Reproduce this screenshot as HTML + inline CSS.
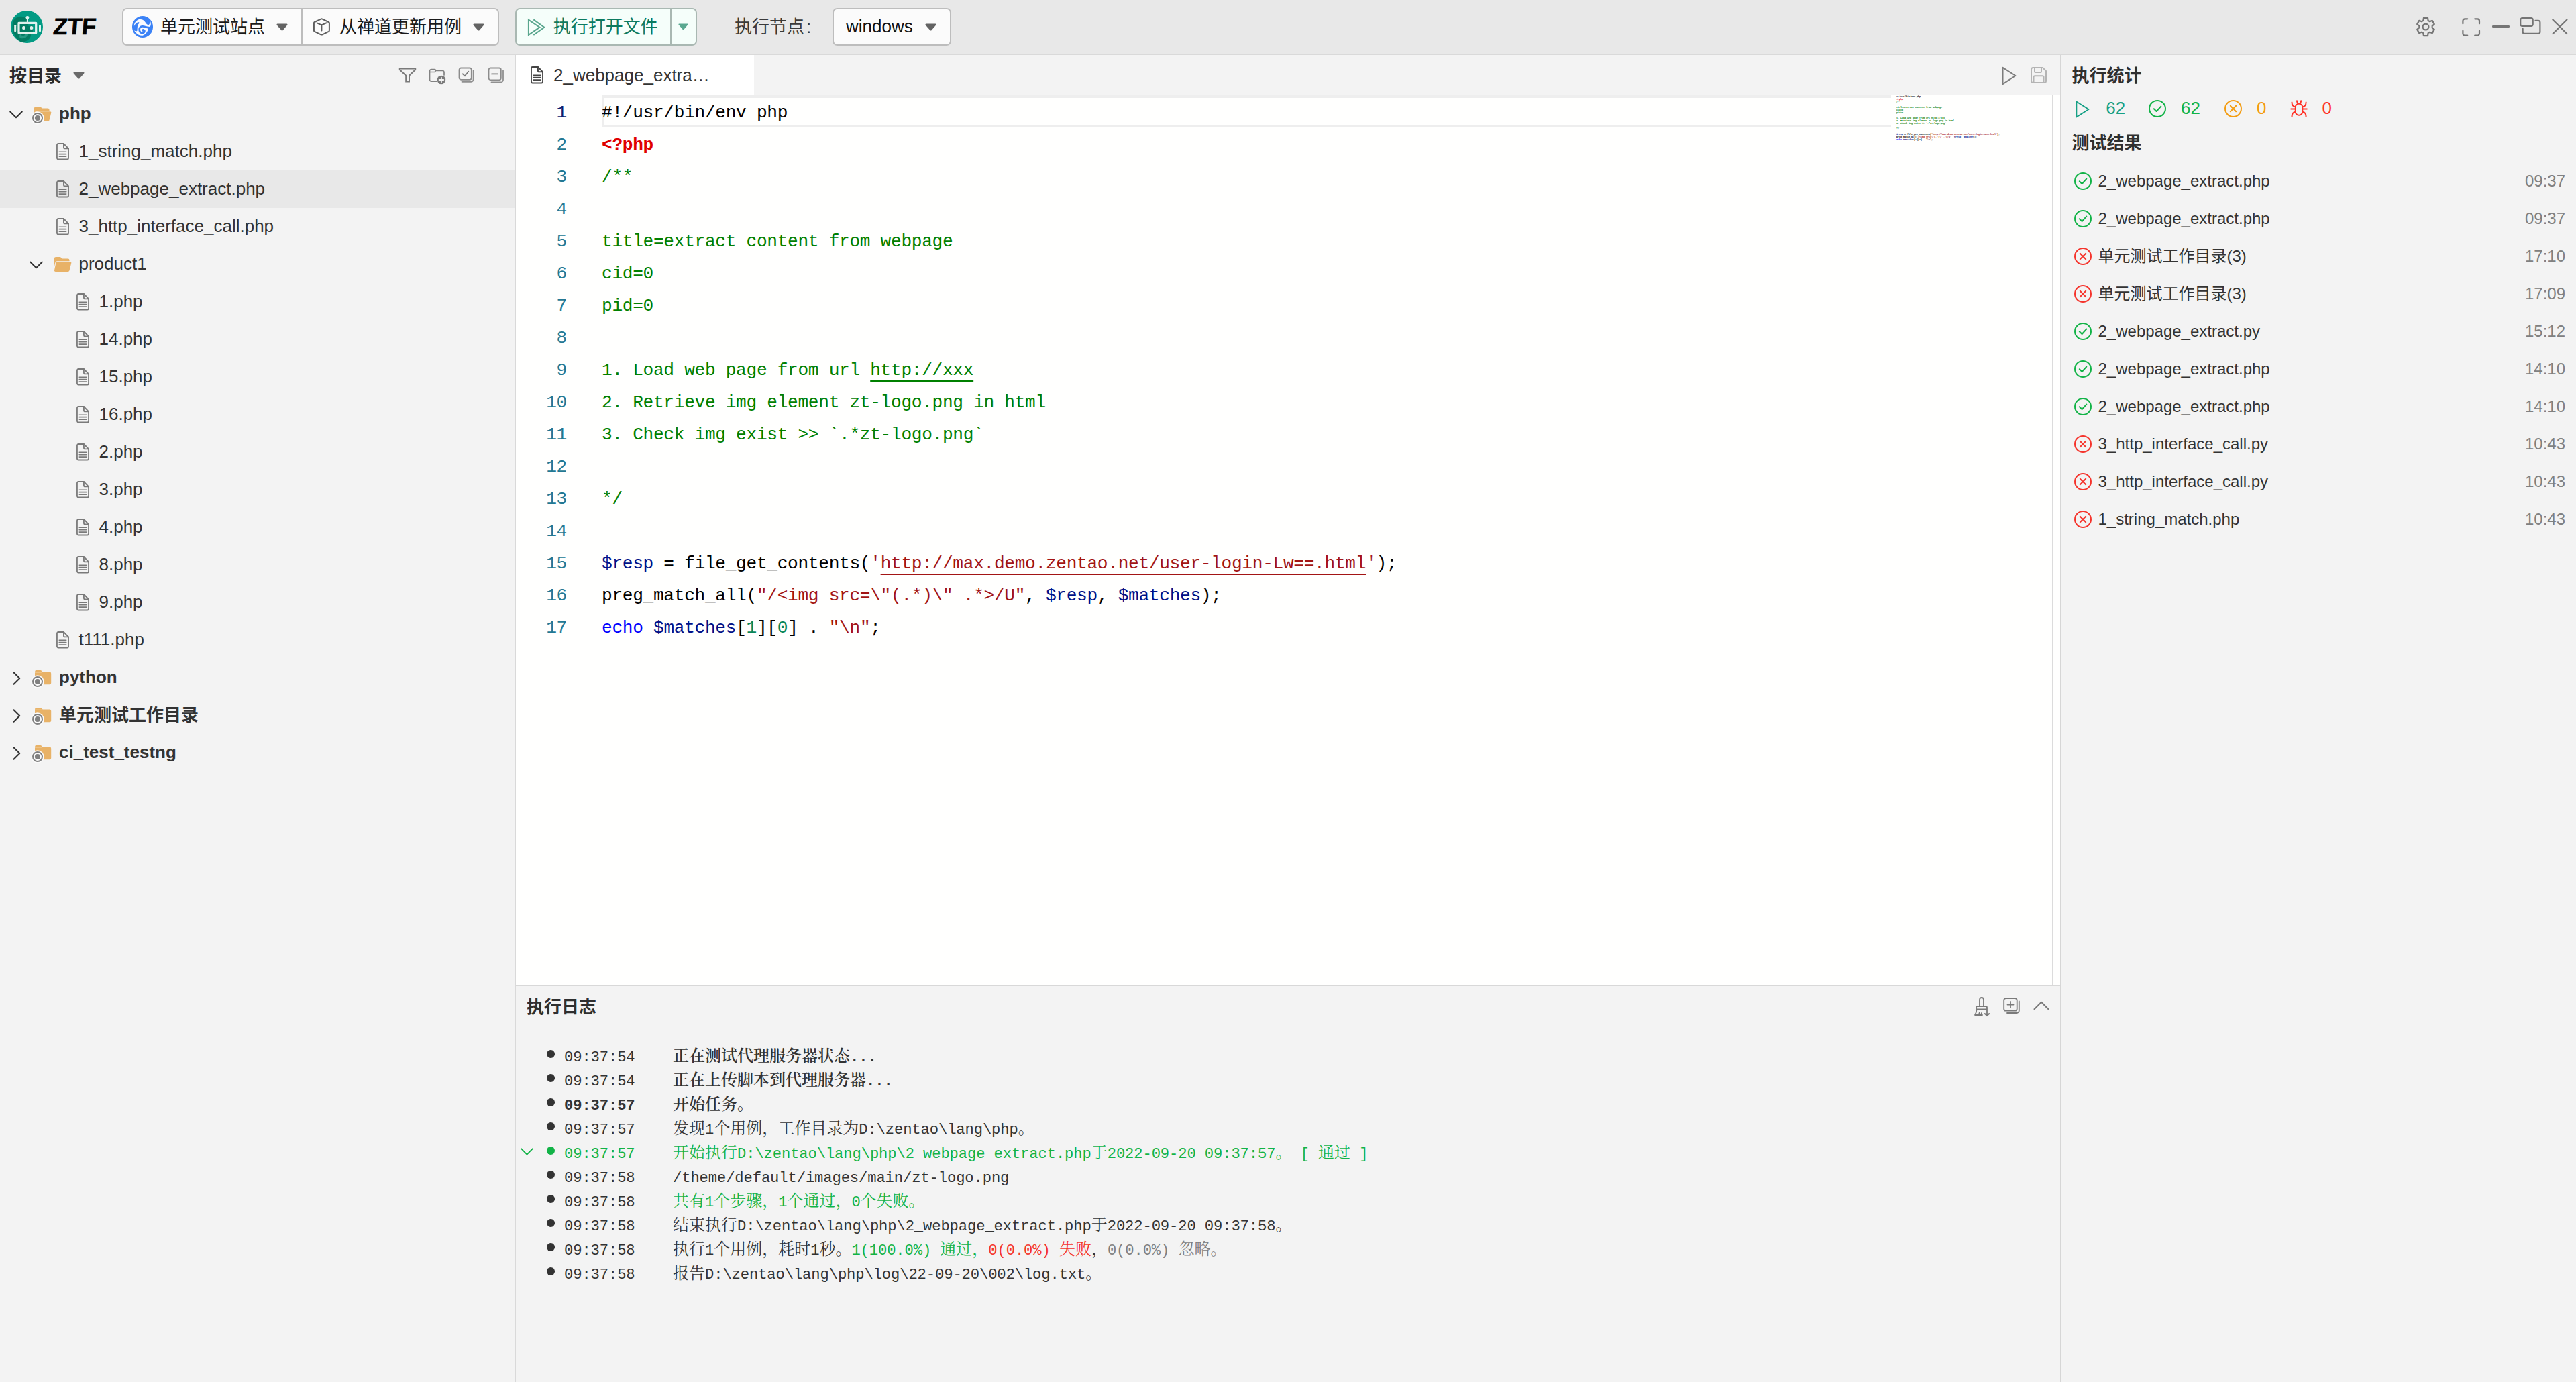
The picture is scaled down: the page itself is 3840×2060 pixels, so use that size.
<!DOCTYPE html>
<html lang="zh-CN"><head><meta charset="utf-8"><title>ZTF</title>
<style>
*{box-sizing:border-box;margin:0;padding:0}
html,body{width:3840px;height:2060px;overflow:hidden;background:#f3f3f3}
body{font-family:"Liberation Sans", "Noto Sans CJK SC", sans-serif;font-size:26px;color:#313c52;position:relative}
.abs{position:absolute}
#hdr{position:absolute;left:0;top:0;width:3840px;height:82px;background:#e8e8e8;border-bottom:2px solid #d9d9d9}
#left{position:absolute;left:0;top:82px;width:769px;height:1978px;background:#f3f3f3;border-right:2px solid #d9d9d9}
#center{position:absolute;left:769px;top:82px;width:2302px;height:1978px;background:#f3f3f3}
#right{position:absolute;left:3071px;top:82px;width:769px;height:1978px;background:#f3f3f3;border-left:2px solid #d6d6d6}
.t{position:absolute;white-space:nowrap;line-height:1}
svg{position:absolute;overflow:visible}
@media (max-width:2000px){html{zoom:.5}}

.cl{position:absolute;left:128px;height:48px;line-height:48px;white-space:pre;font-family:"Liberation Mono", "Noto Serif CJK SC", monospace;font-size:26.2px;letter-spacing:-0.3226px;color:#000}
.ln{position:absolute;left:0px;width:76px;height:48px;line-height:48px;text-align:right;font-family:"Liberation Mono", "Noto Serif CJK SC", monospace;font-size:26.2px;letter-spacing:-0.3226px;color:#237893}
.cm{color:#008000}.va{color:#001188}.kw{color:#0000ff}.st{color:#a31515}.nu{color:#098658}.mt{color:#e00000;font-weight:700}
.lk{text-decoration:underline;text-decoration-thickness:2px;text-underline-offset:8px}
.mm{position:absolute;left:2058px;top:59.599999999999994px;width:1600px;transform:scale(0.13);transform-origin:0 0;white-space:pre;font-family:"Liberation Mono", "Noto Serif CJK SC", monospace;font-size:26.2px;letter-spacing:-0.3226px;font-weight:700;color:#000}.mm .lk{text-decoration:none}

.lg{position:absolute;height:36px;line-height:36px;white-space:pre;font-family:"Liberation Mono", "Noto Serif CJK SC", monospace;font-size:24px;color:#333}
.lg b{font-weight:inherit;font-size:22.2px;letter-spacing:-0.1222px}
.bd b{font-weight:700}.gr{color:#12b347}.rd{color:#f5342c}.gy{color:#808080}
</style></head>
<body>
<div id="hdr"><svg style="left:16px;top:16px" width="48" height="48" viewBox="0 0 48 48">
<circle cx="24" cy="24" r="24" fill="#029b84"/>
<path d="M3.500 16C8 7.500 19 6.500 24.500 12.500C27.500 16 27 20 25 22.500H33V34.500H30C31 41 24 47 15.500 46.500C6 41 0 29 3.500 16Z" fill="#037c62"/>
<path d="M14 40.500C18 42.500 23.500 41 24.800 36.500C25.500 33.500 23.500 31.500 21.500 31.800C23 33.500 22 36.500 19 37C16.500 37.300 15 36 14.500 34.500C12.500 36 12.500 39 14 40.500Z" fill="#2a9f88" opacity=".85"/>
<g fill="#fff" opacity=".88">
<circle cx="24.900" cy="10.400" r="2.400"/><rect x="23.900" y="11" width="2" height="7"/>
<path d="M11.900 16.800H37.800A1.500 1.500 0 0 1 39.300 18.300V32.700A1.500 1.500 0 0 1 37.800 34.200H11.900A1.500 1.500 0 0 1 10.400 32.700V18.300A1.500 1.500 0 0 1 11.900 16.800ZM13.600 20V31H36.100V20Z" fill-rule="evenodd"/>
<circle cx="19.500" cy="25.500" r="2.500"/><circle cx="30.900" cy="25.500" r="2.500"/>
<rect x="5.200" y="20.800" width="3" height="10.600" rx="1.500"/><rect x="42" y="20.800" width="3" height="10.600" rx="1.500"/>
</g></svg>
<div class="t" style="left:77.500px;top:23px;font-size:33.500px;height:33.500px;font-weight:700;color:#000;-webkit-text-stroke:0.700px #000;transform:skewX(-5deg) scaleX(1.040);transform-origin:left bottom">ZTF</div>
<div class="abs" style="left:182px;top:12px;width:562px;height:56px;border:2px solid #bdbdbd;border-radius:7px;background:#fbfbfb"></div>
<div class="abs" style="left:449px;top:14px;width:2px;height:52px;background:#bdbdbd"></div>
<svg style="left:197px;top:24px" width="31" height="32" viewBox="0 0 31 32">
<ellipse cx="15.500" cy="16" rx="15.500" ry="16" fill="#3b82f6"/>
<path d="M2.900 13.400C3.300 10.800 5.800 6.200 10.300 5.100C14.500 4.200 17.300 6.200 19 8.500C20.300 10.300 21.200 11.800 22.800 12.700C24.300 13.500 25.700 12.600 26.100 10.700C26.400 9.400 26.300 8.200 26.400 7.100C27.400 8.400 27.900 10 27.800 12.400C27.600 14.500 26.600 16 25 16.600C24.300 16.800 23.500 16.900 23 16.900C23.800 18.500 23.700 20.200 23 21.800C21.800 24.600 19.500 27.400 15.600 28.700C12.400 29.400 8.500 27.700 5.700 24.800C4.500 23.500 3.600 22.300 3.100 21.200C4.500 21.900 5.800 22.400 7.100 21.900L7.500 16C7.800 13.500 9.200 11.400 10.500 10C9.800 9.500 9.200 9.300 8.700 9.400C6.600 9.900 5.300 11.500 4.400 13.300C3.800 14.300 3.300 15 2.900 15.300Z" fill="#fbfcff"/>
<path d="M8.900 9.300C10 9.100 10.700 9.700 10.400 10.500C9.200 11.800 8 13.800 7.700 16.200C7.400 18.400 7.500 20.400 7.300 21.900C6 22.500 4.600 21.900 3.300 20.600C2.600 18.400 2.600 16.400 3.100 14.800C4.200 12 6.500 9.800 8.900 9.300Z" fill="#3b82f6"/>
<path d="M25 17.100C21.500 17.700 18.500 14.800 14.700 15.400C11.700 15.900 10.500 18.400 10.700 20.600C11 23.300 13 24.900 15.300 24.900C17.500 24.900 18.700 23.200 18.300 21.500" fill="none" stroke="#3b82f6" stroke-width="2.800" stroke-linecap="round"/>
<circle cx="16.500" cy="21" r="2.100" fill="#3b82f6"/>
</svg>
<div class="t" style="left:239px;top:26.50px;font-size:26px;height:26px;color:#1a1a1a;">单元测试站点</div>
<svg style="left:412px;top:35.3px" width="17" height="11" viewBox="0 0 17 11"><path d="M1.6 0.5h13.8c1 0 1.500 1.100.8 1.900l-6.500 7.600c-.6.700-1.700.700-2.300 0L.8 2.400C.1 1.600.6.500 1.600.5z" fill="#636363"/></svg>
<svg style="left:465px;top:26px" width="29" height="28" viewBox="0 0 29 28" fill="none" stroke="#5e5e5e" stroke-width="2" stroke-linejoin="round" stroke-linecap="round">
<path d="M13.300 2.600Q14.400 2.100 15.500 2.600L24.900 7Q25.900 7.500 25.900 8.600V19.300Q25.900 20.400 24.900 20.900L15.500 25.300Q14.400 25.800 13.300 25.300L3.900 20.900Q2.900 20.400 2.900 19.300V8.600Q2.900 7.500 3.900 7Z"/><path d="M7.500 8.300L14.400 11.300L21.300 8.300M14.400 11.300V19.600"/></svg>
<div class="t" style="left:506px;top:26.50px;font-size:26px;height:26px;color:#1a1a1a;">从禅道更新用例</div>
<svg style="left:705px;top:35.3px" width="17" height="11" viewBox="0 0 17 11"><path d="M1.6 0.5h13.8c1 0 1.500 1.100.8 1.900l-6.500 7.600c-.6.700-1.700.700-2.300 0L.8 2.400C.1 1.600.6.500 1.600.5z" fill="#636363"/></svg>
<div class="abs" style="left:768px;top:12px;width:271px;height:56px;border:2px solid #a9b8b2;border-radius:7px;background:#f5fefa"></div>
<div class="abs" style="left:999px;top:14px;width:2px;height:52px;background:#a9b8b2"></div>
<svg style="left:786px;top:27px" width="28" height="27" viewBox="0 0 28 27" fill="none" stroke="#5aa68e" stroke-width="2" stroke-linejoin="miter" stroke-linecap="butt">
<path d="M1.900 2.600V24.800L18.400 13.700Z"/><path d="M9.300 2.400L25.300 13.700L9.300 25"/></svg>
<div class="t" style="left:824.7px;top:26.50px;font-size:26px;height:26px;color:#0d7a5f;">执行打开文件</div>
<svg style="left:1011px;top:35.3px" width="15" height="9.7" viewBox="0 0 17 11"><path d="M1.6 0.5h13.8c1 0 1.500 1.100.8 1.900l-6.500 7.600c-.6.700-1.700.700-2.300 0L.8 2.400C.1 1.600.6.500 1.600.5z" fill="#5aa890"/></svg>
<div class="t" style="left:1095px;top:26.50px;font-size:26px;height:26px;color:#3a3a3a;">执行节点<span style="margin-left:3px">:</span></div>
<div class="abs" style="left:1241px;top:12px;width:177px;height:56px;border:2px solid #bdbdbd;border-radius:7px;background:#fbfbfb"></div>
<div class="t" style="left:1261px;top:26.00px;font-size:26px;height:26px;color:#111;">windows</div>
<svg style="left:1379px;top:35.3px" width="17" height="11" viewBox="0 0 17 11"><path d="M1.6 0.5h13.8c1 0 1.500 1.100.8 1.900l-6.500 7.600c-.6.700-1.700.700-2.300 0L.8 2.400C.1 1.600.6.500 1.600.5z" fill="#636363"/></svg>
<svg style="left:3601px;top:25px" width="30" height="30" viewBox="0 0 30 30" fill="none" stroke="#757575" stroke-width="2.200" stroke-linejoin="round" stroke-linecap="round">
<circle cx="15" cy="15" r="4.400"/>
<path d="M11.39 5.89L11.94 1.95L18.06 1.95L18.61 5.89L21.09 7.32L24.77 5.83L27.83 11.13L24.69 13.57L24.69 16.43L27.83 18.87L24.77 24.17L21.09 22.68L18.61 24.11L18.06 28.05L11.94 28.05L11.39 24.11L8.91 22.68L5.23 24.17L2.17 18.87L5.31 16.43L5.31 13.57L2.17 11.13L5.23 5.83L8.91 7.32Z"/></svg>
<svg style="left:3670px;top:26.500px" width="28" height="27" viewBox="0 0 28 27" fill="none" stroke="#757575" stroke-width="2.200" stroke-linecap="round" stroke-linejoin="round">
<path d="M1.400 8.300V4.300a3 3 0 0 1 3-3h3.800M19.200 1.300H23a3 3 0 0 1 3 3v4M26 18.700v4a3 3 0 0 1-3 3h-3.800M8.200 25.700H4.400a3 3 0 0 1-3-3v-4"/></svg>
<div class="abs" style="left:3714.700px;top:38.400px;width:26.600px;height:2.400px;background:#757575;border-radius:1.200px"></div>
<svg style="left:3755px;top:24.500px" width="34" height="27" viewBox="0 0 34 27" fill="none" stroke="#757575" stroke-width="2.200" stroke-linecap="round" stroke-linejoin="round">
<rect x="2.200" y="2.200" width="18.500" height="11.700" rx="2.600"/><path d="M24.500 5.800h4.300a2.600 2.600 0 0 1 2.600 2.600v13.800a2.600 2.600 0 0 1-2.600 2.600H8.200a2.600 2.600 0 0 1-2.600-2.600v-4.400"/></svg>
<svg style="left:3804px;top:28px" width="24" height="24" viewBox="0 0 24 24" fill="none" stroke="#757575" stroke-width="2.200" stroke-linecap="round"><path d="M1.400 1.500L22.400 22.300M22.400 1.500L1.400 22.300"/></svg></div>
<div id="left"><div class="t" style="left:14px;top:17.50px;font-size:26px;height:26px;color:#2b2b2b;font-weight:700;">按目录</div>
<svg style="left:109px;top:25.299999999999997px" width="17" height="11" viewBox="0 0 17 11"><path d="M1.6 0.5h13.8c1 0 1.500 1.100.8 1.900l-6.500 7.600c-.6.700-1.700.700-2.300 0L.8 2.400C.1 1.600.6.500 1.600.5z" fill="#6a6a6a"/></svg>
<svg style="left:594px;top:18.700000000000003px" width="27" height="22" viewBox="0 0 27 22" fill="none" stroke="#7a7a7a" stroke-width="2" stroke-linejoin="miter" stroke-linecap="butt"><path d="M1.800 1.500H25.200V3L16 11.800V20.500H11.200V11.800L1.800 3Z"/></svg>
<svg style="left:639.300px;top:19.5px" width="28" height="25" viewBox="0 0 28 25" fill="none" stroke="#828282" stroke-width="1.700" stroke-linejoin="round" stroke-linecap="round">
<path d="M11.500 19.200H4A2.500 2.500 0 0 1 1.500 16.700V4A2.500 2.500 0 0 1 4 1.500H8.500C9.600 1.500 10 2 10.800 2.800C11.400 3.400 11.800 3.500 12.500 3.500H20.500A2.500 2.500 0 0 1 23 6V10"/><path d="M1.500 5.500H8.500C9.500 5.500 10.200 4.500 10.800 3"/>
<circle cx="18.900" cy="17" r="6.300" fill="#7a7a7a" stroke="none"/><path d="M18.900 13.700V20.300M15.600 17H22.200" stroke="#f3f3f3" stroke-width="1.900"/></svg>
<svg style="left:683.300px;top:18.200000000000003px" width="25" height="24" viewBox="0 0 25 24" fill="none" stroke="#8c8c8c" stroke-width="1.800" stroke-linejoin="round" stroke-linecap="round">
<rect x="1.500" y="1.500" width="18.300" height="17.300" rx="2.800"/><path d="M6.800 10.300L10 13.300L15.300 6.800" stroke="#7a7a7a"/><path d="M22.600 5.300V18.300A3.500 3.500 0 0 1 19.100 21.800H5.500" stroke="#909090"/></svg>
<svg style="left:726.500px;top:17.700000000000003px" width="25" height="24" viewBox="0 0 25 24" fill="none" stroke="#8c8c8c" stroke-width="1.800" stroke-linejoin="round" stroke-linecap="round">
<rect x="1.500" y="1.500" width="18.300" height="17.800" rx="2.800"/><path d="M6 10.400H15" stroke="#7a7a7a"/><path d="M23 5.300V19A3.500 3.500 0 0 1 19.500 22.500H5.500" stroke="#909090"/></svg>
<svg style="left:14px;top:83.0px" width="20" height="12" viewBox="0 0 20 12" fill="none" stroke="#333" stroke-width="2" stroke-linecap="round" stroke-linejoin="round"><path d="M1.200 1.500L10 10.300L18.800 1.500"/></svg>
<svg style="left:50px;top:76.0px" width="27" height="24" viewBox="0 0 27 24">
<path d="M1 3.200A2.200 2.200 0 0 1 3.200 1H9.200C10 1 10.600 1.300 11.100 1.900L12.600 3.600H21.300A2.200 2.200 0 0 1 23.500 5.800V7.200H4.800C3.700 7.200 2.800 7.900 2.500 9L1 15Z" fill="#e8b267"/>
<path d="M5.300 8.300H24.500A1.800 1.800 0 0 1 26.200 10.600L23.500 21.200A2.400 2.400 0 0 1 21.200 23H3A2 2 0 0 1 1.100 20.500L3.400 9.800A2 2 0 0 1 5.300 8.300Z" fill="#e8b267"/></svg>
<svg style="left:46px;top:83.8px" width="20" height="20" viewBox="0 0 20 20"><circle cx="10" cy="10" r="9.700" fill="#fbfbfb"/><circle cx="10" cy="10" r="7" fill="#fbfbfb" stroke="#808080" stroke-width="2"/><circle cx="10" cy="10" r="4.100" fill="#808080"/></svg>
<div class="t" style="left:88px;top:74.30px;font-size:26px;height:26px;color:#333333;font-weight:700;">php</div>
<svg style="left:83.5px;top:130.7px" width="19" height="25.5" viewBox="0 0 20 26" preserveAspectRatio="none" fill="none" stroke="#7a7a7a" stroke-width="1.900" stroke-linejoin="round" stroke-linecap="round">
<path d="M3.500 1H11.500L19 8.500V23A2 2 0 0 1 17 25H3A2 2 0 0 1 1 23V3A2 2 0 0 1 3 1Z"/><path d="M11.500 1V6.500A2 2 0 0 0 13.500 8.500H19"/><path d="M4.500 13.500H15.500M4.500 17H15.500M4.500 20.500H15.500" stroke-width="1.700"/></svg>
<div class="t" style="left:117.5px;top:130.30px;font-size:26px;height:26px;color:#333333;">1_string_match.php</div>
<div class="abs" style="left:0;top:172.0px;width:767px;height:56px;background:#e8e8e8"></div>
<svg style="left:83.5px;top:186.7px" width="19" height="25.5" viewBox="0 0 20 26" preserveAspectRatio="none" fill="none" stroke="#7a7a7a" stroke-width="1.900" stroke-linejoin="round" stroke-linecap="round">
<path d="M3.500 1H11.500L19 8.500V23A2 2 0 0 1 17 25H3A2 2 0 0 1 1 23V3A2 2 0 0 1 3 1Z"/><path d="M11.500 1V6.500A2 2 0 0 0 13.500 8.500H19"/><path d="M4.500 13.500H15.500M4.500 17H15.500M4.500 20.500H15.500" stroke-width="1.700"/></svg>
<div class="t" style="left:117.5px;top:186.30px;font-size:26px;height:26px;color:#333333;">2_webpage_extract.php</div>
<svg style="left:83.5px;top:242.7px" width="19" height="25.5" viewBox="0 0 20 26" preserveAspectRatio="none" fill="none" stroke="#7a7a7a" stroke-width="1.900" stroke-linejoin="round" stroke-linecap="round">
<path d="M3.500 1H11.500L19 8.500V23A2 2 0 0 1 17 25H3A2 2 0 0 1 1 23V3A2 2 0 0 1 3 1Z"/><path d="M11.500 1V6.500A2 2 0 0 0 13.500 8.500H19"/><path d="M4.500 13.500H15.500M4.500 17H15.500M4.500 20.500H15.500" stroke-width="1.700"/></svg>
<div class="t" style="left:117.5px;top:242.30px;font-size:26px;height:26px;color:#333333;">3_http_interface_call.php</div>
<svg style="left:44px;top:307.0px" width="20" height="12" viewBox="0 0 20 12" fill="none" stroke="#333" stroke-width="2" stroke-linecap="round" stroke-linejoin="round"><path d="M1.200 1.500L10 10.300L18.800 1.500"/></svg>
<svg style="left:80px;top:300.0px" width="27" height="24" viewBox="0 0 27 24">
<path d="M1 3.200A2.200 2.200 0 0 1 3.200 1H9.200C10 1 10.600 1.300 11.100 1.900L12.600 3.600H21.300A2.200 2.200 0 0 1 23.500 5.800V7.200H4.800C3.700 7.200 2.800 7.900 2.500 9L1 15Z" fill="#e8b267"/>
<path d="M5.300 8.300H24.500A1.800 1.800 0 0 1 26.200 10.600L23.500 21.200A2.400 2.400 0 0 1 21.200 23H3A2 2 0 0 1 1.100 20.500L3.400 9.800A2 2 0 0 1 5.300 8.300Z" fill="#e8b267"/></svg>
<div class="t" style="left:117.5px;top:298.30px;font-size:26px;height:26px;color:#333333;">product1</div>
<svg style="left:113.5px;top:354.7px" width="19" height="25.5" viewBox="0 0 20 26" preserveAspectRatio="none" fill="none" stroke="#7a7a7a" stroke-width="1.900" stroke-linejoin="round" stroke-linecap="round">
<path d="M3.500 1H11.500L19 8.500V23A2 2 0 0 1 17 25H3A2 2 0 0 1 1 23V3A2 2 0 0 1 3 1Z"/><path d="M11.500 1V6.500A2 2 0 0 0 13.500 8.500H19"/><path d="M4.500 13.500H15.500M4.500 17H15.500M4.500 20.500H15.500" stroke-width="1.700"/></svg>
<div class="t" style="left:147.5px;top:354.30px;font-size:26px;height:26px;color:#333333;">1.php</div>
<svg style="left:113.5px;top:410.7px" width="19" height="25.5" viewBox="0 0 20 26" preserveAspectRatio="none" fill="none" stroke="#7a7a7a" stroke-width="1.900" stroke-linejoin="round" stroke-linecap="round">
<path d="M3.500 1H11.500L19 8.500V23A2 2 0 0 1 17 25H3A2 2 0 0 1 1 23V3A2 2 0 0 1 3 1Z"/><path d="M11.500 1V6.500A2 2 0 0 0 13.500 8.500H19"/><path d="M4.500 13.500H15.500M4.500 17H15.500M4.500 20.500H15.500" stroke-width="1.700"/></svg>
<div class="t" style="left:147.5px;top:410.30px;font-size:26px;height:26px;color:#333333;">14.php</div>
<svg style="left:113.5px;top:466.7px" width="19" height="25.5" viewBox="0 0 20 26" preserveAspectRatio="none" fill="none" stroke="#7a7a7a" stroke-width="1.900" stroke-linejoin="round" stroke-linecap="round">
<path d="M3.500 1H11.500L19 8.500V23A2 2 0 0 1 17 25H3A2 2 0 0 1 1 23V3A2 2 0 0 1 3 1Z"/><path d="M11.500 1V6.500A2 2 0 0 0 13.500 8.500H19"/><path d="M4.500 13.500H15.500M4.500 17H15.500M4.500 20.500H15.500" stroke-width="1.700"/></svg>
<div class="t" style="left:147.5px;top:466.30px;font-size:26px;height:26px;color:#333333;">15.php</div>
<svg style="left:113.5px;top:522.7px" width="19" height="25.5" viewBox="0 0 20 26" preserveAspectRatio="none" fill="none" stroke="#7a7a7a" stroke-width="1.900" stroke-linejoin="round" stroke-linecap="round">
<path d="M3.500 1H11.500L19 8.500V23A2 2 0 0 1 17 25H3A2 2 0 0 1 1 23V3A2 2 0 0 1 3 1Z"/><path d="M11.500 1V6.500A2 2 0 0 0 13.500 8.500H19"/><path d="M4.500 13.500H15.500M4.500 17H15.500M4.500 20.500H15.500" stroke-width="1.700"/></svg>
<div class="t" style="left:147.5px;top:522.30px;font-size:26px;height:26px;color:#333333;">16.php</div>
<svg style="left:113.5px;top:578.7px" width="19" height="25.5" viewBox="0 0 20 26" preserveAspectRatio="none" fill="none" stroke="#7a7a7a" stroke-width="1.900" stroke-linejoin="round" stroke-linecap="round">
<path d="M3.500 1H11.500L19 8.500V23A2 2 0 0 1 17 25H3A2 2 0 0 1 1 23V3A2 2 0 0 1 3 1Z"/><path d="M11.500 1V6.500A2 2 0 0 0 13.500 8.500H19"/><path d="M4.500 13.500H15.500M4.500 17H15.500M4.500 20.500H15.500" stroke-width="1.700"/></svg>
<div class="t" style="left:147.5px;top:578.30px;font-size:26px;height:26px;color:#333333;">2.php</div>
<svg style="left:113.5px;top:634.7px" width="19" height="25.5" viewBox="0 0 20 26" preserveAspectRatio="none" fill="none" stroke="#7a7a7a" stroke-width="1.900" stroke-linejoin="round" stroke-linecap="round">
<path d="M3.500 1H11.500L19 8.500V23A2 2 0 0 1 17 25H3A2 2 0 0 1 1 23V3A2 2 0 0 1 3 1Z"/><path d="M11.500 1V6.500A2 2 0 0 0 13.500 8.500H19"/><path d="M4.500 13.500H15.500M4.500 17H15.500M4.500 20.500H15.500" stroke-width="1.700"/></svg>
<div class="t" style="left:147.5px;top:634.30px;font-size:26px;height:26px;color:#333333;">3.php</div>
<svg style="left:113.5px;top:690.7px" width="19" height="25.5" viewBox="0 0 20 26" preserveAspectRatio="none" fill="none" stroke="#7a7a7a" stroke-width="1.900" stroke-linejoin="round" stroke-linecap="round">
<path d="M3.500 1H11.500L19 8.500V23A2 2 0 0 1 17 25H3A2 2 0 0 1 1 23V3A2 2 0 0 1 3 1Z"/><path d="M11.500 1V6.500A2 2 0 0 0 13.500 8.500H19"/><path d="M4.500 13.500H15.500M4.500 17H15.500M4.500 20.500H15.500" stroke-width="1.700"/></svg>
<div class="t" style="left:147.5px;top:690.30px;font-size:26px;height:26px;color:#333333;">4.php</div>
<svg style="left:113.5px;top:746.7px" width="19" height="25.5" viewBox="0 0 20 26" preserveAspectRatio="none" fill="none" stroke="#7a7a7a" stroke-width="1.900" stroke-linejoin="round" stroke-linecap="round">
<path d="M3.500 1H11.500L19 8.500V23A2 2 0 0 1 17 25H3A2 2 0 0 1 1 23V3A2 2 0 0 1 3 1Z"/><path d="M11.500 1V6.500A2 2 0 0 0 13.500 8.500H19"/><path d="M4.500 13.500H15.500M4.500 17H15.500M4.500 20.500H15.500" stroke-width="1.700"/></svg>
<div class="t" style="left:147.5px;top:746.30px;font-size:26px;height:26px;color:#333333;">8.php</div>
<svg style="left:113.5px;top:802.7px" width="19" height="25.5" viewBox="0 0 20 26" preserveAspectRatio="none" fill="none" stroke="#7a7a7a" stroke-width="1.900" stroke-linejoin="round" stroke-linecap="round">
<path d="M3.500 1H11.500L19 8.500V23A2 2 0 0 1 17 25H3A2 2 0 0 1 1 23V3A2 2 0 0 1 3 1Z"/><path d="M11.500 1V6.500A2 2 0 0 0 13.500 8.500H19"/><path d="M4.500 13.500H15.500M4.500 17H15.500M4.500 20.500H15.500" stroke-width="1.700"/></svg>
<div class="t" style="left:147.5px;top:802.30px;font-size:26px;height:26px;color:#333333;">9.php</div>
<svg style="left:83.5px;top:858.7px" width="19" height="25.5" viewBox="0 0 20 26" preserveAspectRatio="none" fill="none" stroke="#7a7a7a" stroke-width="1.900" stroke-linejoin="round" stroke-linecap="round">
<path d="M3.500 1H11.500L19 8.500V23A2 2 0 0 1 17 25H3A2 2 0 0 1 1 23V3A2 2 0 0 1 3 1Z"/><path d="M11.500 1V6.500A2 2 0 0 0 13.500 8.500H19"/><path d="M4.500 13.500H15.500M4.500 17H15.500M4.500 20.500H15.500" stroke-width="1.700"/></svg>
<div class="t" style="left:117.5px;top:858.30px;font-size:26px;height:26px;color:#333333;">t111.php</div>
<svg style="left:18.5px;top:918.5px" width="12" height="20" viewBox="0 0 12 20" fill="none" stroke="#333" stroke-width="2" stroke-linecap="round" stroke-linejoin="round"><path d="M1.500 1.200L10.300 10L1.500 18.800"/></svg>
<svg style="left:51px;top:916.0px" width="26" height="23" viewBox="0 0 26 23">
<path d="M1 3.200A2.200 2.200 0 0 1 3.200 1H9.200C10 1 10.600 1.300 11.100 1.900L12.600 3.600H23A2.200 2.200 0 0 1 25.200 5.800V20A2.200 2.200 0 0 1 23 22.200H3.200A2.200 2.200 0 0 1 1 20Z" fill="#e8b267"/>
<path d="M1 4.200H12" stroke="#efc790" stroke-width="1.200"/></svg>
<svg style="left:46px;top:923.8px" width="20" height="20" viewBox="0 0 20 20"><circle cx="10" cy="10" r="9.700" fill="#fbfbfb"/><circle cx="10" cy="10" r="7" fill="#fbfbfb" stroke="#808080" stroke-width="2"/><circle cx="10" cy="10" r="4.100" fill="#808080"/></svg>
<div class="t" style="left:88px;top:914.30px;font-size:26px;height:26px;color:#333333;font-weight:700;">python</div>
<svg style="left:18.5px;top:974.5px" width="12" height="20" viewBox="0 0 12 20" fill="none" stroke="#333" stroke-width="2" stroke-linecap="round" stroke-linejoin="round"><path d="M1.500 1.200L10.300 10L1.500 18.800"/></svg>
<svg style="left:51px;top:972.0px" width="26" height="23" viewBox="0 0 26 23">
<path d="M1 3.200A2.200 2.200 0 0 1 3.200 1H9.200C10 1 10.600 1.300 11.100 1.900L12.600 3.600H23A2.200 2.200 0 0 1 25.200 5.800V20A2.200 2.200 0 0 1 23 22.200H3.200A2.200 2.200 0 0 1 1 20Z" fill="#e8b267"/>
<path d="M1 4.200H12" stroke="#efc790" stroke-width="1.200"/></svg>
<svg style="left:46px;top:979.8px" width="20" height="20" viewBox="0 0 20 20"><circle cx="10" cy="10" r="9.700" fill="#fbfbfb"/><circle cx="10" cy="10" r="7" fill="#fbfbfb" stroke="#808080" stroke-width="2"/><circle cx="10" cy="10" r="4.100" fill="#808080"/></svg>
<div class="t" style="left:88px;top:971.20px;font-size:26px;height:26px;color:#333333;font-weight:700;">单元测试工作目录</div>
<svg style="left:18.5px;top:1030.5px" width="12" height="20" viewBox="0 0 12 20" fill="none" stroke="#333" stroke-width="2" stroke-linecap="round" stroke-linejoin="round"><path d="M1.500 1.200L10.300 10L1.500 18.800"/></svg>
<svg style="left:51px;top:1028.0px" width="26" height="23" viewBox="0 0 26 23">
<path d="M1 3.200A2.200 2.200 0 0 1 3.200 1H9.200C10 1 10.600 1.300 11.100 1.900L12.600 3.600H23A2.200 2.200 0 0 1 25.200 5.800V20A2.200 2.200 0 0 1 23 22.200H3.200A2.200 2.200 0 0 1 1 20Z" fill="#e8b267"/>
<path d="M1 4.200H12" stroke="#efc790" stroke-width="1.200"/></svg>
<svg style="left:46px;top:1035.8px" width="20" height="20" viewBox="0 0 20 20"><circle cx="10" cy="10" r="9.700" fill="#fbfbfb"/><circle cx="10" cy="10" r="7" fill="#fbfbfb" stroke="#808080" stroke-width="2"/><circle cx="10" cy="10" r="4.100" fill="#808080"/></svg>
<div class="t" style="left:88px;top:1026.30px;font-size:26px;height:26px;color:#333333;font-weight:700;">ci_test_testng</div></div>
<div id="center"><div class="abs" style="left:0;top:0;width:355px;height:60px;background:#fff"></div>
<svg style="left:22px;top:17.2px" width="19" height="25.5" viewBox="0 0 20 26" preserveAspectRatio="none" fill="none" stroke="#444" stroke-width="2" stroke-linejoin="round" stroke-linecap="round">
<path d="M3.500 1H11.500L19 8.500V23A2 2 0 0 1 17 25H3A2 2 0 0 1 1 23V3A2 2 0 0 1 3 1Z"/><path d="M11.500 1V6.500A2 2 0 0 0 13.500 8.500H19"/><path d="M4.500 13.500H15.500M4.500 17H15.500M4.500 20.500H15.500" stroke-width="1.700"/></svg>
<div class="t" style="left:56px;top:17.00px;font-size:26px;height:26px;color:#333;">2_webpage_extra…</div>
<svg style="left:2215px;top:17px" width="22" height="28" viewBox="0 0 22 28" fill="none" stroke="#7d7d7d" stroke-width="2" stroke-linejoin="round"><path d="M1.500 1.800V26.200L20.500 14Z"/></svg>
<svg style="left:2258px;top:18px" width="24" height="24" viewBox="0 0 24 24" fill="none" stroke="#b4b4b4" stroke-width="2" stroke-linejoin="round" stroke-linecap="round">
<path d="M3.500 1H18L23 6V20.500A2.500 2.500 0 0 1 20.500 23H3.500A2.500 2.500 0 0 1 1 20.500V3.500A2.500 2.500 0 0 1 3.500 1Z"/><path d="M6 1.500V6.500A1.500 1.500 0 0 0 7.500 8H14.500A1.500 1.500 0 0 0 16 6.500V1.500"/><path d="M4.500 22.500V15A1.800 1.800 0 0 1 6.300 13.200H17.700A1.800 1.800 0 0 1 19.500 15V22.500"/></svg>
<div class="abs" style="left:0;top:60px;width:2302px;height:1326px;background:#fffffe"></div>
<div class="abs" style="left:128px;top:60px;width:1922px;height:48px;border:4px solid #eeeeee;border-right:none"></div>
<div class="abs" style="left:2290px;top:60px;width:1px;height:1326px;background:#dcdcdc"></div>
<div class="ln" style="top:61.5px;color:#0b216f">1</div>
<div class="cl" style="top:61.5px">#!/usr/bin/env php</div>
<div class="ln" style="top:109.5px">2</div>
<div class="cl" style="top:109.5px"><span class="mt">&lt;?php</span></div>
<div class="ln" style="top:157.5px">3</div>
<div class="cl" style="top:157.5px"><span class="cm">/**</span></div>
<div class="ln" style="top:205.5px">4</div>
<div class="ln" style="top:253.5px">5</div>
<div class="cl" style="top:253.5px"><span class="cm">title=extract content from webpage</span></div>
<div class="ln" style="top:301.5px">6</div>
<div class="cl" style="top:301.5px"><span class="cm">cid=0</span></div>
<div class="ln" style="top:349.5px">7</div>
<div class="cl" style="top:349.5px"><span class="cm">pid=0</span></div>
<div class="ln" style="top:397.5px">8</div>
<div class="ln" style="top:445.5px">9</div>
<div class="cl" style="top:445.5px"><span class="cm">1. Load web page from url <span class="lk">http://xxx</span></span></div>
<div class="ln" style="top:493.5px">10</div>
<div class="cl" style="top:493.5px"><span class="cm">2. Retrieve img element zt-logo.png in html</span></div>
<div class="ln" style="top:541.5px">11</div>
<div class="cl" style="top:541.5px"><span class="cm">3. Check img exist &gt;&gt; `.*zt-logo.png`</span></div>
<div class="ln" style="top:589.5px">12</div>
<div class="ln" style="top:637.5px">13</div>
<div class="cl" style="top:637.5px"><span class="cm">*/</span></div>
<div class="ln" style="top:685.5px">14</div>
<div class="ln" style="top:733.5px">15</div>
<div class="cl" style="top:733.5px"><span class="va">$resp</span> = file_get_contents(<span class="st">'<span class="lk">http://max.demo.zentao.net/user-login-Lw==.html</span>'</span>);</div>
<div class="ln" style="top:781.5px">16</div>
<div class="cl" style="top:781.5px">preg_match_all(<span class="st">"/&lt;img src=\"(.*)\" .*&gt;/U"</span>, <span class="va">$resp</span>, <span class="va">$matches</span>);</div>
<div class="ln" style="top:829.5px">17</div>
<div class="cl" style="top:829.5px"><span class="kw">echo</span> <span class="va">$matches</span>[<span class="nu">1</span>][<span class="nu">0</span>] . <span class="st">"\n"</span>;</div>
<div class="mm"><div style="height:30.8px;line-height:30.8px">#!/usr/bin/env php</div><div style="height:30.8px;line-height:30.8px"><span class="mt">&lt;?php</span></div><div style="height:30.8px;line-height:30.8px"><span class="cm">/**</span></div><div style="height:30.8px;line-height:30.8px">&nbsp;</div><div style="height:30.8px;line-height:30.8px"><span class="cm">title=extract content from webpage</span></div><div style="height:30.8px;line-height:30.8px"><span class="cm">cid=0</span></div><div style="height:30.8px;line-height:30.8px"><span class="cm">pid=0</span></div><div style="height:30.8px;line-height:30.8px">&nbsp;</div><div style="height:30.8px;line-height:30.8px"><span class="cm">1. Load web page from url <span class="lk">http://xxx</span></span></div><div style="height:30.8px;line-height:30.8px"><span class="cm">2. Retrieve img element zt-logo.png in html</span></div><div style="height:30.8px;line-height:30.8px"><span class="cm">3. Check img exist &gt;&gt; `.*zt-logo.png`</span></div><div style="height:30.8px;line-height:30.8px">&nbsp;</div><div style="height:30.8px;line-height:30.8px"><span class="cm">*/</span></div><div style="height:30.8px;line-height:30.8px">&nbsp;</div><div style="height:30.8px;line-height:30.8px"><span class="va">$resp</span> = file_get_contents(<span class="st">'<span class="lk">http://max.demo.zentao.net/user-login-Lw==.html</span>'</span>);</div><div style="height:30.8px;line-height:30.8px">preg_match_all(<span class="st">"/&lt;img src=\"(.*)\" .*&gt;/U"</span>, <span class="va">$resp</span>, <span class="va">$matches</span>);</div><div style="height:30.8px;line-height:30.8px"><span class="kw">echo</span> <span class="va">$matches</span>[<span class="nu">1</span>][<span class="nu">0</span>] . <span class="st">"\n"</span>;</div></div>
<div class="abs" style="left:0;top:1386px;width:2302px;height:2px;background:#d8d8d8"></div>
<div class="t" style="left:16px;top:1406.20px;font-size:26px;height:26px;color:#2f2f2f;font-weight:700;">执行日志</div>
<svg style="left:2174px;top:1404px" width="24" height="30" viewBox="0 0 24 30" fill="none" stroke="#7a7a7a" stroke-width="1.800" stroke-linecap="round" stroke-linejoin="round">
<path d="M8 14V4A3 3 0 0 1 14 4V14"/><path d="M4.500 14H17.500A1.500 1.500 0 0 1 19 15.500V18.500H3V15.500A1.500 1.500 0 0 1 4.500 14Z"/><path d="M3.500 18.500C3.500 22 2.500 24.500 1 27H12"/><path d="M6.500 27L7.800 23.500M10 27L11 24"/><path d="M19 19.500V28M15.800 25L19 28.200L22.200 25"/></svg>
<svg style="left:2217px;top:1405px" width="26" height="25" viewBox="0 0 26 25" fill="none" stroke="#7a7a7a" stroke-width="1.800" stroke-linejoin="round" stroke-linecap="round">
<rect x="1.200" y="1.200" width="19.500" height="18.500" rx="3"/><path d="M6.500 10.500H15.500M11 6V15"/><path d="M23.800 5.500V19.500A3.500 3.500 0 0 1 20.300 23H6"/></svg>
<svg style="left:2262px;top:1410px" width="24" height="14" viewBox="0 0 24 14" fill="none" stroke="#7a7a7a" stroke-width="2" stroke-linecap="round" stroke-linejoin="round"><path d="M1.500 12.200L12 1.800L22.500 12.200"/></svg>
<div class="abs" style="left:46.2px;top:1483.4px;width:11.6px;height:11.6px;border-radius:50%;background:#333"></div>
<div class="lg" style="left:72px;top:1476.0px;color:#333"><b>09:37:54</b></div>
<div class="lg bd" style="left:234px;top:1476.0px;font-weight:600">正在测试代理服务器状态<b>...</b></div>
<div class="abs" style="left:46.2px;top:1519.4px;width:11.6px;height:11.6px;border-radius:50%;background:#333"></div>
<div class="lg" style="left:72px;top:1512.0px;color:#333"><b>09:37:54</b></div>
<div class="lg bd" style="left:234px;top:1512.0px;font-weight:600">正在上传脚本到代理服务器<b>...</b></div>
<div class="abs" style="left:46.2px;top:1555.4px;width:11.6px;height:11.6px;border-radius:50%;background:#333"></div>
<div class="lg" style="left:72px;top:1548.0px;color:#333;font-weight:700"><b>09:37:57</b></div>
<div class="lg bd" style="left:234px;top:1548.0px;font-weight:600">开始任务。</div>
<div class="abs" style="left:46.2px;top:1591.4px;width:11.6px;height:11.6px;border-radius:50%;background:#333"></div>
<div class="lg" style="left:72px;top:1584.0px;color:#333"><b>09:37:57</b></div>
<div class="lg" style="left:234px;top:1584.0px;">发现<b>1</b>个用例，工作目录为<b>D:\zentao\lang\php</b>。</div>
<div class="abs" style="left:46.2px;top:1627.4px;width:11.6px;height:11.6px;border-radius:50%;background:#12b347"></div>
<svg style="left:7px;top:1628.5px" width="19" height="11" viewBox="0 0 19 11" fill="none" stroke="#12b347" stroke-width="1.800" stroke-linecap="round" stroke-linejoin="round"><path d="M1 1.200L9.500 9.700L18 1.200"/></svg>
<div class="lg" style="left:72px;top:1620.0px;color:#12b347"><b>09:37:57</b></div>
<div class="lg" style="left:234px;top:1620.0px;"><span class="gr">开始执行<b>D:\zentao\lang\php\2_webpage_extract.php</b>于<b>2022-09-20 09:37:57</b>。<b> [ </b>通过<b> ]</b></span></div>
<div class="abs" style="left:46.2px;top:1663.4px;width:11.6px;height:11.6px;border-radius:50%;background:#333"></div>
<div class="lg" style="left:72px;top:1656.0px;color:#333"><b>09:37:58</b></div>
<div class="lg" style="left:234px;top:1656.0px;"><b>/theme/default/images/main/zt-logo.png</b></div>
<div class="abs" style="left:46.2px;top:1699.4px;width:11.6px;height:11.6px;border-radius:50%;background:#333"></div>
<div class="lg" style="left:72px;top:1692.0px;color:#333"><b>09:37:58</b></div>
<div class="lg" style="left:234px;top:1692.0px;"><span class="gr">共有<b>1</b>个步骤，<b>1</b>个通过，<b>0</b>个失败。</span></div>
<div class="abs" style="left:46.2px;top:1735.4px;width:11.6px;height:11.6px;border-radius:50%;background:#333"></div>
<div class="lg" style="left:72px;top:1728.0px;color:#333"><b>09:37:58</b></div>
<div class="lg" style="left:234px;top:1728.0px;">结束执行<b>D:\zentao\lang\php\2_webpage_extract.php</b>于<b>2022-09-20 09:37:58</b>。</div>
<div class="abs" style="left:46.2px;top:1771.4px;width:11.6px;height:11.6px;border-radius:50%;background:#333"></div>
<div class="lg" style="left:72px;top:1764.0px;color:#333"><b>09:37:58</b></div>
<div class="lg" style="left:234px;top:1764.0px;">执行<b>1</b>个用例，耗时<b>1</b>秒。<span class="gr"><b>1(100.0%) </b>通过，</span><span class="rd"><b>0(0.0%) </b>失败</span>，<span class="gy"><b>0(0.0%) </b>忽略。</span></div>
<div class="abs" style="left:46.2px;top:1807.4px;width:11.6px;height:11.6px;border-radius:50%;background:#333"></div>
<div class="lg" style="left:72px;top:1800.0px;color:#333"><b>09:37:58</b></div>
<div class="lg" style="left:234px;top:1800.0px;">报告<b>D:\zentao\lang\php\log\22-09-20\002\log.txt</b>。</div></div>
<div id="right"><div class="t" style="left:15.5px;top:18.00px;font-size:26px;height:26px;color:#2f2f2f;font-weight:700;">执行统计</div>
<div class="t" style="left:15.5px;top:118.20px;font-size:26px;height:26px;color:#2f2f2f;font-weight:700;">测试结果</div>
<svg style="left:21px;top:68px" width="21" height="26" viewBox="0 0 21 26" fill="none" stroke="#16a085" stroke-width="2" stroke-linejoin="round"><path d="M1.300 1.500V24.500L19.500 13Z"/></svg>
<div class="t" style="left:66.30000000000018px;top:65.90px;font-size:26px;height:26px;color:#16a085;">62</div>
<svg style="left:129.30000000000018px;top:65.69999999999999px" width="28" height="28" viewBox="0 0 28 28" fill="none" stroke="#12b347" stroke-width="2" stroke-linecap="round" stroke-linejoin="round"><circle cx="14" cy="14" r="12"/><path d="M8.800 14.300L12.600 18L19.300 10.600"/></svg>
<div class="t" style="left:178.0999999999999px;top:65.90px;font-size:26px;height:26px;color:#12b347;">62</div>
<svg style="left:241.5999999999999px;top:65.69999999999999px" width="28" height="28" viewBox="0 0 28 28" fill="none" stroke="#f39c11" stroke-width="2" stroke-linecap="round" stroke-linejoin="round"><circle cx="14" cy="14" r="12"/><path d="M9.800 9.800L18.200 18.200M18.200 9.800L9.800 18.200"/></svg>
<div class="t" style="left:291px;top:65.90px;font-size:26px;height:26px;color:#f39c11;">0</div>
<svg style="left:340.5px;top:66.5px" width="26" height="26" viewBox="0 0 26 26" fill="none" stroke="#ff3227" stroke-width="2" stroke-linecap="round" stroke-linejoin="round">
<rect x="7.800" y="5.600" width="10.500" height="17.200" rx="5.250"/>
<path d="M10 1.300C10 4 11.300 5.400 13.050 5.400C14.800 5.400 16.100 4 16.100 1.300"/>
<path d="M7.800 10.300C4.500 10 2.500 7.500 2.500 3.600M18.300 10.300C21.600 10 23.600 7.500 23.600 3.600M1.200 13.600H7.800M18.300 13.600H24.900M7.800 17.800C4.500 18.200 2.500 20.500 2.500 25M18.300 17.800C21.600 18.200 23.600 20.500 23.600 25"/></svg>
<div class="t" style="left:388.5999999999999px;top:65.90px;font-size:26px;height:26px;color:#ff3227;">0</div>
<svg style="left:17.5px;top:174px" width="28" height="28" viewBox="0 0 28 28" fill="none" stroke="#12b347" stroke-width="2" stroke-linecap="round" stroke-linejoin="round"><circle cx="14" cy="14" r="12"/><path d="M8.800 14.300L12.600 18L19.300 10.600"/></svg>
<div class="t" style="left:54.5px;top:176.00px;font-size:24px;height:24px;color:#333;">2_webpage_extract.php</div>
<div class="t" style="right:16px;top:175.5px;font-size:24px;height:24px;color:#808080">09:37</div>
<svg style="left:17.5px;top:230px" width="28" height="28" viewBox="0 0 28 28" fill="none" stroke="#12b347" stroke-width="2" stroke-linecap="round" stroke-linejoin="round"><circle cx="14" cy="14" r="12"/><path d="M8.800 14.300L12.600 18L19.300 10.600"/></svg>
<div class="t" style="left:54.5px;top:232.00px;font-size:24px;height:24px;color:#333;">2_webpage_extract.php</div>
<div class="t" style="right:16px;top:231.5px;font-size:24px;height:24px;color:#808080">09:37</div>
<svg style="left:17.5px;top:286px" width="28" height="28" viewBox="0 0 28 28" fill="none" stroke="#f5342c" stroke-width="2" stroke-linecap="round" stroke-linejoin="round"><circle cx="14" cy="14" r="12"/><path d="M9.800 9.800L18.200 18.200M18.200 9.800L9.800 18.200"/></svg>
<div class="t" style="left:54.5px;top:288.00px;font-size:24px;height:24px;color:#333;">单元测试工作目录(3)</div>
<div class="t" style="right:16px;top:287.5px;font-size:24px;height:24px;color:#808080">17:10</div>
<svg style="left:17.5px;top:342px" width="28" height="28" viewBox="0 0 28 28" fill="none" stroke="#f5342c" stroke-width="2" stroke-linecap="round" stroke-linejoin="round"><circle cx="14" cy="14" r="12"/><path d="M9.800 9.800L18.200 18.200M18.200 9.800L9.800 18.200"/></svg>
<div class="t" style="left:54.5px;top:344.00px;font-size:24px;height:24px;color:#333;">单元测试工作目录(3)</div>
<div class="t" style="right:16px;top:343.5px;font-size:24px;height:24px;color:#808080">17:09</div>
<svg style="left:17.5px;top:398px" width="28" height="28" viewBox="0 0 28 28" fill="none" stroke="#12b347" stroke-width="2" stroke-linecap="round" stroke-linejoin="round"><circle cx="14" cy="14" r="12"/><path d="M8.800 14.300L12.600 18L19.300 10.600"/></svg>
<div class="t" style="left:54.5px;top:400.00px;font-size:24px;height:24px;color:#333;">2_webpage_extract.py</div>
<div class="t" style="right:16px;top:399.5px;font-size:24px;height:24px;color:#808080">15:12</div>
<svg style="left:17.5px;top:454px" width="28" height="28" viewBox="0 0 28 28" fill="none" stroke="#12b347" stroke-width="2" stroke-linecap="round" stroke-linejoin="round"><circle cx="14" cy="14" r="12"/><path d="M8.800 14.300L12.600 18L19.300 10.600"/></svg>
<div class="t" style="left:54.5px;top:456.00px;font-size:24px;height:24px;color:#333;">2_webpage_extract.php</div>
<div class="t" style="right:16px;top:455.5px;font-size:24px;height:24px;color:#808080">14:10</div>
<svg style="left:17.5px;top:510px" width="28" height="28" viewBox="0 0 28 28" fill="none" stroke="#12b347" stroke-width="2" stroke-linecap="round" stroke-linejoin="round"><circle cx="14" cy="14" r="12"/><path d="M8.800 14.300L12.600 18L19.300 10.600"/></svg>
<div class="t" style="left:54.5px;top:512.00px;font-size:24px;height:24px;color:#333;">2_webpage_extract.php</div>
<div class="t" style="right:16px;top:511.5px;font-size:24px;height:24px;color:#808080">14:10</div>
<svg style="left:17.5px;top:566px" width="28" height="28" viewBox="0 0 28 28" fill="none" stroke="#f5342c" stroke-width="2" stroke-linecap="round" stroke-linejoin="round"><circle cx="14" cy="14" r="12"/><path d="M9.800 9.800L18.200 18.200M18.200 9.800L9.800 18.200"/></svg>
<div class="t" style="left:54.5px;top:568.00px;font-size:24px;height:24px;color:#333;">3_http_interface_call.py</div>
<div class="t" style="right:16px;top:567.5px;font-size:24px;height:24px;color:#808080">10:43</div>
<svg style="left:17.5px;top:622px" width="28" height="28" viewBox="0 0 28 28" fill="none" stroke="#f5342c" stroke-width="2" stroke-linecap="round" stroke-linejoin="round"><circle cx="14" cy="14" r="12"/><path d="M9.800 9.800L18.200 18.200M18.200 9.800L9.800 18.200"/></svg>
<div class="t" style="left:54.5px;top:624.00px;font-size:24px;height:24px;color:#333;">3_http_interface_call.py</div>
<div class="t" style="right:16px;top:623.5px;font-size:24px;height:24px;color:#808080">10:43</div>
<svg style="left:17.5px;top:678px" width="28" height="28" viewBox="0 0 28 28" fill="none" stroke="#f5342c" stroke-width="2" stroke-linecap="round" stroke-linejoin="round"><circle cx="14" cy="14" r="12"/><path d="M9.800 9.800L18.200 18.200M18.200 9.800L9.800 18.200"/></svg>
<div class="t" style="left:54.5px;top:680.00px;font-size:24px;height:24px;color:#333;">1_string_match.php</div>
<div class="t" style="right:16px;top:679.5px;font-size:24px;height:24px;color:#808080">10:43</div></div>
</body></html>
